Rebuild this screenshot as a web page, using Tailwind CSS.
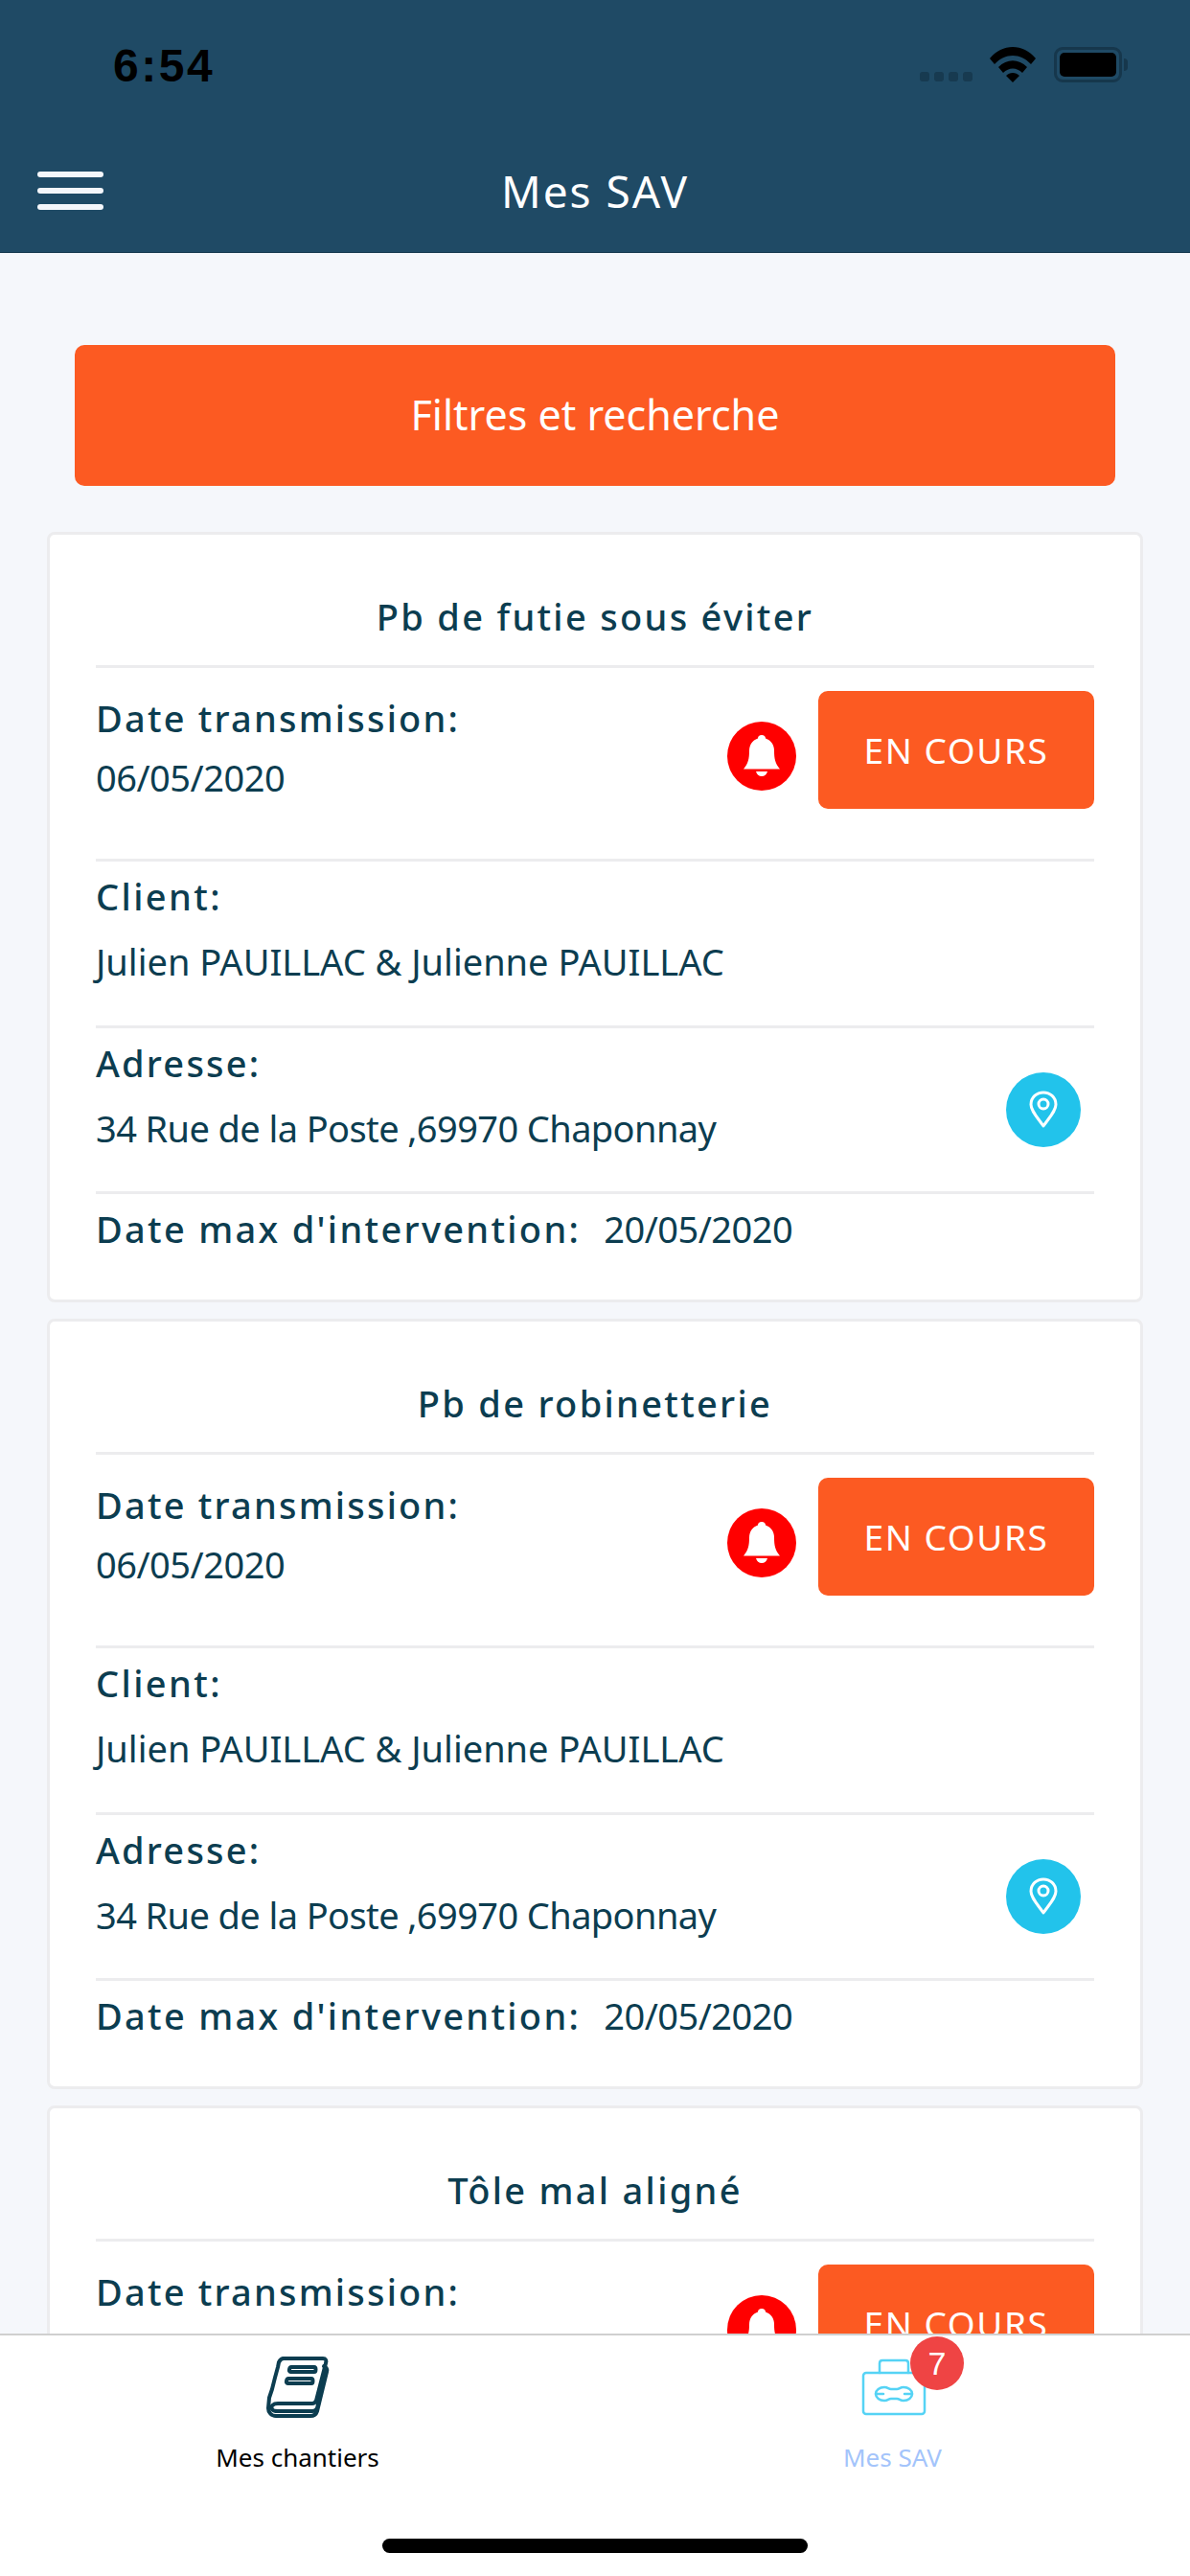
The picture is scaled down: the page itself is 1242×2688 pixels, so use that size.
<!DOCTYPE html>
<html lang="fr">

<head>
  <meta charset="UTF-8">
  <meta name="viewport" content="width=device-width, initial-scale=1.0">
  <title>Mes SAV</title>
  <script src="https://cdn.jsdelivr.net/npm/@tailwindcss/browser@4"></script>
</head>

<body class="bg-[#f5f7fb]">
<div class="w-[1242px] h-[2688px] flex flex-col overflow-hidden font-['Noto_Sans',sans-serif] text-[#0c3d50]">

  <!-- header -->
  <header class="h-[264px] shrink-0 bg-[#1f4a65] border-b border-[#173a50] flex flex-col">
    <div class="h-[132px] flex items-start justify-between pl-[118px] pr-[65px] pt-[42px]">
      <span class="font-['Liberation_Sans',sans-serif] font-bold text-[48px] leading-[54px] text-black tracking-[2.500px]">6:54</span>
      <div class="flex items-start pt-[7px]">
        <div class="flex gap-[5px] mt-[26px] mr-[18px]">
          <span class="w-[10px] h-[10px] rounded-[3px] bg-[#173a50]"></span>
          <span class="w-[10px] h-[10px] rounded-[3px] bg-[#173a50]"></span>
          <span class="w-[10px] h-[10px] rounded-[3px] bg-[#173a50]"></span>
          <span class="w-[10px] h-[10px] rounded-[3px] bg-[#173a50]"></span>
        </div>
        <svg width="48" height="37" viewBox="0 0 48 37" class="mr-[19px]">
          <path d="M0 12C13-4 35-4 48 12l-5 6C32 6 16 6 5 18Z" fill="#000"/>
          <path d="M9 21c9-9 21-9 30 0l-5 6c-6-6-14-6-20 0Z" fill="#000"/>
          <path d="M17 30c4-4 10-4 14 0l-7 7Z" fill="#000"/>
        </svg>
        <div class="w-[71px] h-[37px] rounded-[9px] border-[3px] border-[#16374c] p-[3px]">
          <div class="w-full h-full rounded-[5px] bg-black"></div>
        </div>
        <span class="w-[4px] h-[13px] mt-[12px] ml-[2px] rounded-r-full bg-[#16374c]"></span>
      </div>
    </div>
    <div class="relative mt-[34px] flex items-center justify-center h-[66px]">
      <div class="absolute left-[39px] top-[13px] flex flex-col gap-[11px]">
        <span class="block w-[69px] h-[6px] rounded-full bg-[#f5f7fb]"></span>
        <span class="block w-[69px] h-[6px] rounded-full bg-[#f5f7fb]"></span>
        <span class="block w-[69px] h-[6px] rounded-full bg-[#f5f7fb]"></span>
      </div>
      <h1 class="text-white text-[46px] tracking-[2px]">Mes SAV</h1>
    </div>
  </header>

  <!-- list -->
  <main class="flex-1 min-h-0 overflow-hidden px-[49px] pt-[96px]">
    <button class="block mx-[29px] w-[1086px] h-[147px] rounded-[10px] bg-[#fc5a22] text-white text-[43px]">Filtres et recherche</button>

    <div class="mt-[48px] flex flex-col gap-[17px]">

      <article class="h-[804px] bg-white rounded-[8px] border-[3px] border-[#ececee] px-[48px]">
        <h2 class="h-[139px] pt-[55px] border-b-[3px] border-[#ececee] text-center text-[38px] leading-[60px] font-medium tracking-[2.300px]">Pb de futie sous éviter</h2>
        <section class="h-[202px] flex justify-between border-b-[3px] border-[#ececee]">
          <div class="pt-[22px]">
            <p class="text-[38px] leading-[60px] font-medium tracking-[2.200px]">Date transmission:</p>
            <p class="text-[38px] leading-[60px] mt-[2px] tracking-[-0.5px]">06/05/2020</p>
          </div>
          <div class="flex items-start pt-[24px]">
            <span class="mt-[32px] mr-[23px] w-[72px] h-[72px] rounded-full bg-[#ff0000] flex items-center justify-center">
              <svg width="38" height="44" viewBox="0 0 38 44"><path d="M19 0c2.500 0 4 1.500 4 3.500 6 2 9 7 9 13 0 8 1 13 6 19H0c5-6 6-11 6-19 0-6 3-11 9-13C15 1.500 16.500 0 19 0Z M13 38h12c-1 3.500-3 5-6 5s-5-1.500-6-5Z" fill="#fff"/></svg>
            </span>
            <span class="w-[288px] h-[123px] rounded-[10px] bg-[#fc5a22] text-white text-[37px] tracking-[1.600px] flex items-center justify-center">EN COURS</span>
          </div>
        </section>
        <section class="h-[174px] border-b-[3px] border-[#ececee] pt-[6px]">
          <p class="text-[38px] leading-[60px] font-medium tracking-[2.400px]">Client:</p>
          <p class="text-[38px] leading-[60px] mt-[8px]">Julien PAUILLAC &amp; Julienne PAUILLAC</p>
        </section>
        <section class="h-[173px] flex justify-between border-b-[3px] border-[#ececee] pt-[6px]">
          <div>
            <p class="text-[38px] leading-[60px] font-medium tracking-[2.200px]">Adresse:</p>
            <p class="text-[38px] leading-[60px] mt-[8px] tracking-[-0.6px]">34 Rue de la Poste ,69970 Chaponnay</p>
          </div>
          <span class="mt-[40px] mr-[14px] w-[78px] h-[78px] rounded-full bg-[#22c3eb] flex items-center justify-center">
            <svg width="30" height="40" viewBox="0 0 30 40" fill="none" stroke="#fff" stroke-width="3"><path d="M15 37C8 27 2 21 2 14.500 2 7 8 2 15 2s13 5 13 12.500C28 21 22 27 15 37Z" stroke-linejoin="round"/><circle cx="15" cy="14" r="5"/></svg>
          </span>
        </section>
        <section class="pt-[6px] flex">
          <p class="text-[38px] leading-[60px] font-medium tracking-[2.300px]">Date max d'intervention:</p>
          <p class="text-[38px] leading-[60px] ml-[24px] tracking-[-0.5px]">20/05/2020</p>
        </section>
      </article>

      <article class="h-[804px] bg-white rounded-[8px] border-[3px] border-[#ececee] px-[48px]">
        <h2 class="h-[139px] pt-[55px] border-b-[3px] border-[#ececee] text-center text-[38px] leading-[60px] font-medium tracking-[2.300px]">Pb de robinetterie</h2>
        <section class="h-[202px] flex justify-between border-b-[3px] border-[#ececee]">
          <div class="pt-[22px]">
            <p class="text-[38px] leading-[60px] font-medium tracking-[2.200px]">Date transmission:</p>
            <p class="text-[38px] leading-[60px] mt-[2px] tracking-[-0.5px]">06/05/2020</p>
          </div>
          <div class="flex items-start pt-[24px]">
            <span class="mt-[32px] mr-[23px] w-[72px] h-[72px] rounded-full bg-[#ff0000] flex items-center justify-center">
              <svg width="38" height="44" viewBox="0 0 38 44"><path d="M19 0c2.500 0 4 1.500 4 3.500 6 2 9 7 9 13 0 8 1 13 6 19H0c5-6 6-11 6-19 0-6 3-11 9-13C15 1.500 16.500 0 19 0Z M13 38h12c-1 3.500-3 5-6 5s-5-1.500-6-5Z" fill="#fff"/></svg>
            </span>
            <span class="w-[288px] h-[123px] rounded-[10px] bg-[#fc5a22] text-white text-[37px] tracking-[1.600px] flex items-center justify-center">EN COURS</span>
          </div>
        </section>
        <section class="h-[174px] border-b-[3px] border-[#ececee] pt-[6px]">
          <p class="text-[38px] leading-[60px] font-medium tracking-[2.400px]">Client:</p>
          <p class="text-[38px] leading-[60px] mt-[8px]">Julien PAUILLAC &amp; Julienne PAUILLAC</p>
        </section>
        <section class="h-[173px] flex justify-between border-b-[3px] border-[#ececee] pt-[6px]">
          <div>
            <p class="text-[38px] leading-[60px] font-medium tracking-[2.200px]">Adresse:</p>
            <p class="text-[38px] leading-[60px] mt-[8px] tracking-[-0.6px]">34 Rue de la Poste ,69970 Chaponnay</p>
          </div>
          <span class="mt-[40px] mr-[14px] w-[78px] h-[78px] rounded-full bg-[#22c3eb] flex items-center justify-center">
            <svg width="30" height="40" viewBox="0 0 30 40" fill="none" stroke="#fff" stroke-width="3"><path d="M15 37C8 27 2 21 2 14.500 2 7 8 2 15 2s13 5 13 12.500C28 21 22 27 15 37Z" stroke-linejoin="round"/><circle cx="15" cy="14" r="5"/></svg>
          </span>
        </section>
        <section class="pt-[6px] flex">
          <p class="text-[38px] leading-[60px] font-medium tracking-[2.300px]">Date max d'intervention:</p>
          <p class="text-[38px] leading-[60px] ml-[24px] tracking-[-0.5px]">20/05/2020</p>
        </section>
      </article>

      <!-- third card runs under the tab bar -->
      <article class="h-[804px] bg-white rounded-[8px] border-[3px] border-[#ececee] px-[48px]">
        <h2 class="h-[139px] pt-[55px] border-b-[3px] border-[#ececee] text-center text-[38px] leading-[60px] font-medium tracking-[2.300px]">Tôle mal aligné</h2>
        <section class="h-[202px] flex justify-between border-b-[3px] border-[#ececee]">
          <div class="pt-[22px]">
            <p class="text-[38px] leading-[60px] font-medium tracking-[2.200px]">Date transmission:</p>
          </div>
          <div class="flex items-start pt-[24px]">
            <span class="mt-[32px] mr-[23px] w-[72px] h-[72px] rounded-full bg-[#ff0000] flex items-center justify-center">
              <svg width="38" height="44" viewBox="0 0 38 44"><path d="M19 0c2.500 0 4 1.500 4 3.500 6 2 9 7 9 13 0 8 1 13 6 19H0c5-6 6-11 6-19 0-6 3-11 9-13C15 1.500 16.500 0 19 0Z M13 38h12c-1 3.500-3 5-6 5s-5-1.500-6-5Z" fill="#fff"/></svg>
            </span>
            <span class="w-[288px] h-[123px] rounded-[10px] bg-[#fc5a22] text-white text-[37px] tracking-[1.600px] flex items-center justify-center">EN COURS</span>
          </div>
        </section>
      </article>
    </div>
  </main>

  <!-- tab bar -->
  <nav class="relative h-[253px] shrink-0 bg-white border-t-2 border-[#cfcfcf] flex text-[26px]">
    <div class="w-[621px] flex flex-col items-center pt-[22px]">
      <svg width="70" height="64" viewBox="0 0 70 64" fill="none" stroke="#0c3d50" stroke-width="4" stroke-linecap="round" stroke-linejoin="round" class="ml-[4px]">
        <path d="M18 2h41c3 0 4 2 3 5L52 46c-1 2-2 3-4 3H12c-5 0-8 3-6 6 1 2 3 2 6 2h36c3 0 4-1 5-3L62 16"/>
        <path d="M18 2c-3 0-4 2-5 4l-1 5-3 11-3 12-3 9-1 11c0 4 3 8 8 8h36c4 0 6-2 7-5l10-41c1-3 0-4-3-6"/>
        <path d="M26 11h24c2 0 2 5 0 5H25c-2 0-1-5 1-5Z M23 23h24c2 0 2 5 0 5H22c-2 0-1-5 1-5Z"/>
      </svg>
      <span class="mt-[22px] leading-[38px] text-black">Mes chantiers</span>
    </div>
    <div class="w-[621px] flex flex-col items-center pt-[24px] relative">
      <svg width="68" height="60" viewBox="0 0 68 60" fill="none" stroke="#55d3f5" stroke-width="2.500" stroke-linejoin="round" stroke-linecap="round" class="ml-[3px]">
        <rect x="2" y="15" width="64" height="43" rx="3"/>
        <path d="M19 15V5c0-2 1-3 3-3h24c2 0 3 1 3 3v10"/>
        <path d="M24 30c4 0 4 2 7 2h6c3 0 3-2 7-2 5 0 9 3 9 7s-4 7-9 7c-4 0-4-2-7-2h-6c-3 0-3 2-7 2-5 0-9-3-9-7s4-7 9-7Z"/>
        <path d="M15 37h8M45 37h8"/>
      </svg>
      <span class="mt-[24px] leading-[38px] text-[#a3c4fb]">Mes SAV</span>
      <span class="absolute left-[329px] top-[1px] w-[56px] h-[56px] rounded-full bg-[#ef4444] text-white text-[34px] flex items-center justify-center font-['Liberation_Sans',sans-serif]">7</span>
    </div>
    <span class="absolute left-[399px] top-[212px] w-[444px] h-[15px] rounded-full bg-black"></span>
  </nav>
</div>
</body>

</html>
